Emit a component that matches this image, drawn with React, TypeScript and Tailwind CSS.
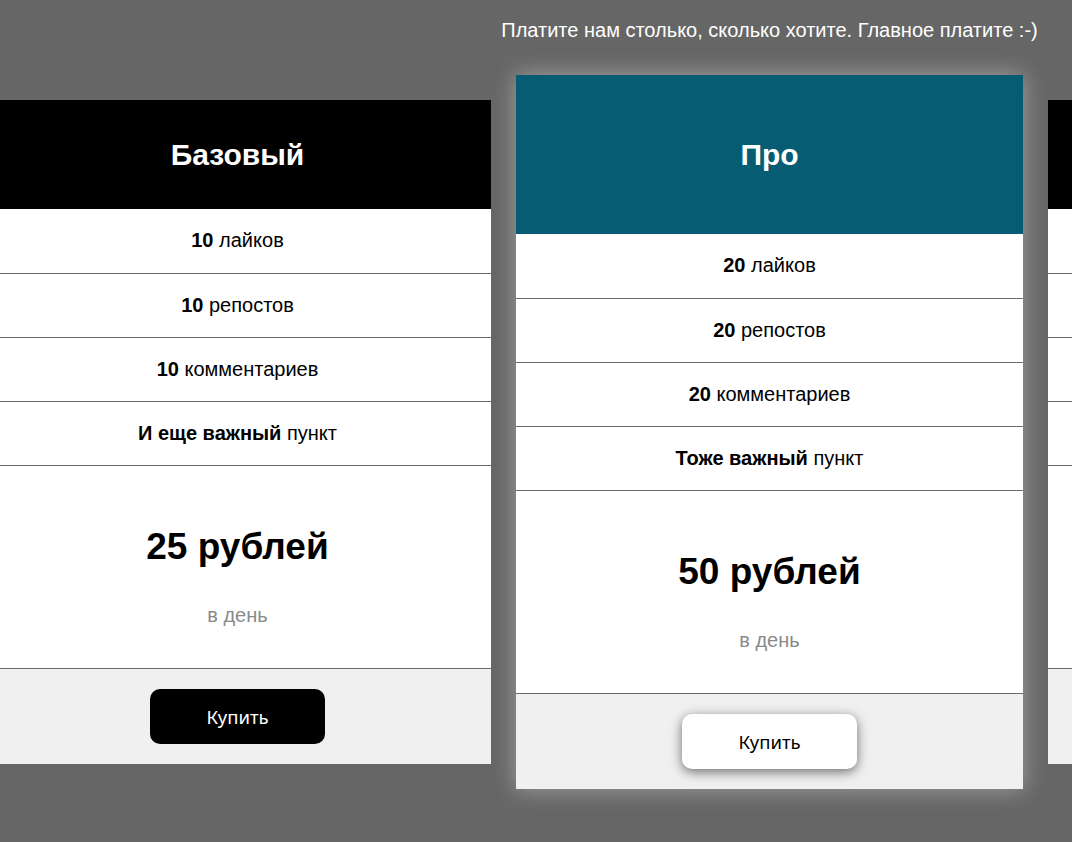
import React from 'react';

type Plan = {
  title: string;
  count: number;
  extra: string;
  price: number;
  featured?: boolean;
};

const plans: Plan[] = [
  { title: 'Базовый', count: 10, extra: 'И еще важный', price: 25 },
  { title: 'Про', count: 20, extra: 'Тоже важный', price: 50, featured: true },
  { title: 'Бизнес', count: 30, extra: 'Самый важный', price: 100 },
];

const PlanCard = ({ plan }: { plan: Plan }) => {
  const rows = [
    { b: String(plan.count), t: 'лайков' },
    { b: String(plan.count), t: 'репостов' },
    { b: String(plan.count), t: 'комментариев' },
    { b: plan.extra, t: 'пункт' },
  ];

  return (
    <div
      className={
        plan.featured
          ? 'w-[507px] shrink-0 bg-white flex flex-col shadow-[0_0_22px_rgba(255,255,255,0.4)]'
          : 'w-[507px] shrink-0 bg-white flex flex-col'
      }
    >
      <div
        className={
          plan.featured
            ? 'h-[159px] bg-[#065c73] flex items-center justify-center'
            : 'h-[109px] bg-black flex items-center justify-center'
        }
      >
        <h2 className="text-white text-[30px] font-bold leading-[34px]">{plan.title}</h2>
      </div>

      <div className="flex flex-col">
        {rows.map((row, i) => (
          <div
            key={i}
            className={
              i === 0
                ? 'h-[65px] pb-[2px] border-b border-[#6a6a6a] flex items-center justify-center text-[20px] text-black'
                : 'h-[64px] pb-[1px] border-b border-[#6a6a6a] flex items-center justify-center text-[20px] text-black'
            }
          >
            <span>
              <b>{row.b}</b> {row.t}
            </span>
          </div>
        ))}
      </div>

      <div className="border-b border-[#6a6a6a] flex flex-col items-center pt-[60px] pb-[41px]">
        <div className="text-[37px] font-bold leading-[41px] text-black">{plan.price} рублей</div>
        <div className="mt-[37px] text-[20px] leading-[23px] text-[#8a8a8a]">в день</div>
      </div>

      <div className="bg-[#f0f0f0] flex justify-center py-[20px]">
        <button
          className={
            plan.featured
              ? "w-[175px] h-[55px] rounded-[10px] bg-white text-black text-[18.5px] font-['Noto_Sans',sans-serif] shadow-[0_3px_12px_rgba(0,0,0,0.55)]"
              : "w-[175px] h-[55px] rounded-[10px] bg-black text-white text-[18.5px] font-['Noto_Sans',sans-serif]"
          }
        >
          Купить
        </button>
      </div>
    </div>
  );
};

export default function App() {
  return (
    <div className="w-full min-h-[842px] bg-[#666666] overflow-hidden font-['Liberation_Sans',Arial,sans-serif]">
      <div className="w-[1571px] ml-[-16px] pt-[19px]">
        <p className="text-center text-white text-[20px] leading-[23px]">
          Платите нам столько, сколько хотите. Главное платите :-)
        </p>
        <div className="mt-[33px] flex items-center gap-[25px]">
          {plans.map((p) => (
            <PlanCard key={p.title} plan={p} />
          ))}
        </div>
      </div>
    </div>
  );
}
